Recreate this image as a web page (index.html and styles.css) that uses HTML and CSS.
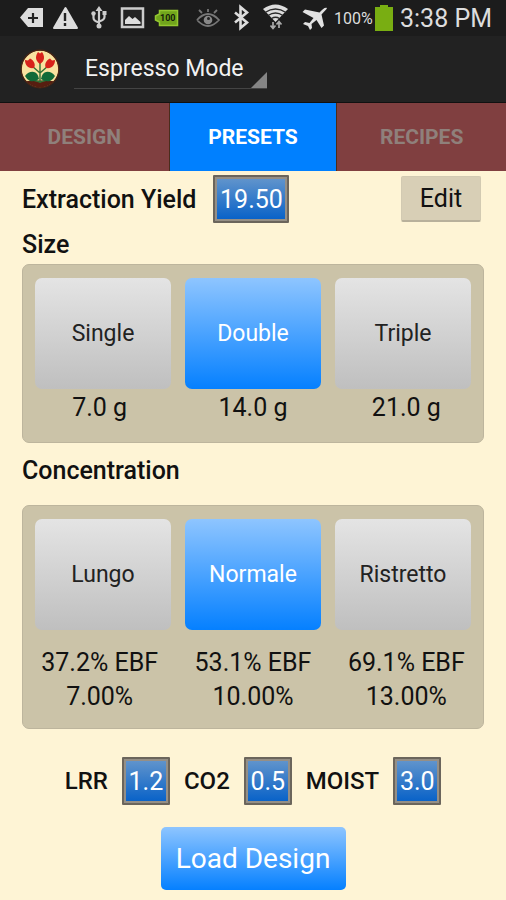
FILE: index.html
```html
<!DOCTYPE html>
<html lang="en">
<head>
<meta charset="utf-8">
<meta name="viewport" content="width=device-width, initial-scale=1">
<title>Espresso Mode</title>
<link rel="stylesheet" href="styles.css">
</head>
<body>
<header>
  <div class="status">
    <div class="status-icons">
      <svg width="30" height="36" viewBox="18 0 30 36" aria-hidden="true"><path d="M28 8h15v19H28l-8-9.500z" fill="#ddd"/><path d="M33 13v10M28 18h10" stroke="#222" stroke-width="2.200"/></svg>
      <svg width="36" height="36" viewBox="48 0 36 36" aria-hidden="true"><path d="M65.500 8l11.500 20H54z" fill="#ddd" stroke="#ddd" stroke-width="2" stroke-linejoin="round"/><path d="M65 13v8M65 23v3" stroke="#222" stroke-width="2.400"/></svg>
      <svg width="30" height="36" viewBox="84 0 30 36" aria-hidden="true"><g fill="none" stroke="#ccc" stroke-width="2.200"><path d="M99 10v17M93.500 14v4q0 3 5.500 4.500M104.500 13v4q0 3-5.500 4.500"/></g><path d="M99 6l3.500 5h-7zM102.500 11h4v4h-4z" fill="#ccc"/><circle cx="93.500" cy="13.500" r="2.200" fill="#ccc"/><circle cx="99" cy="26" r="2.500" fill="#ccc"/></svg>
      <svg width="36" height="36" viewBox="114 0 36 36" aria-hidden="true"><rect x="122" y="8.500" width="21" height="18.500" fill="#222" stroke="#ccc" stroke-width="2.500"/><path d="M125 24v-4l4-4 3.500 3 2.500-2 5.500 5v2z" fill="#ddd"/></svg>
      <svg width="38" height="36" viewBox="150 0 38 36" aria-hidden="true"><path d="M159.500 10.500h18v15h-18v-3.500l-4-2v-4l4-2z" fill="#71a51c" stroke="#93c72f" stroke-width="1.500"/><text class="battery-text" x="160" y="21">100</text></svg>
      <svg width="38" height="36" viewBox="188 0 38 36" aria-hidden="true"><g fill="none" stroke="#777" stroke-width="1.800"><path d="M197 20q11-12 22 0-11 12-22 0M208 12V9M202 13l-3-3M214 13l3-3"/></g><circle cx="208" cy="20" r="4.300" fill="#888"/><circle cx="208.500" cy="18.500" r="1.500" fill="#222"/></svg>
      <svg width="30" height="36" viewBox="226 0 30 36" aria-hidden="true"><path d="M235 12.500l12 10-6.500 5.500V7l6.500 5.500-12 10" fill="none" stroke="#ddd" stroke-width="2.600"/></svg>
      <svg width="40" height="36" viewBox="256 0 40 36" aria-hidden="true"><path d="M263 9q12.500-9 25 0L275.500 22z" fill="#ddd"/><path d="M265 12.500q10.500-7 21 0M268 15.500q7.500-5 15 0M271.500 18.500q4-2.500 8 0" fill="none" stroke="#292929" stroke-width="1.300"/><path d="M273 22v6M270.500 25.500l2.500 3 2.500-3M279 28v-6M276.500 24.500l2.500-3 2.500 3" fill="none" stroke="#aaa" stroke-width="1.700"/></svg>
      <svg width="36" height="36" viewBox="296 0 36 36" aria-hidden="true"><path d="M327 8c-2-1-4 1-7.500 4.500L305 9.500l-2.500 2.500 11 6-4 5-4.500-1-2 2 5 2 2 4 2-2-.5-4 5-4 5 8 2.500-2.500-2.500-11c3-3.500 5-5 5.500-6.500z" fill="#e2e2e2"/></svg>
    </div>
    <span class="percent">100%</span>
    <svg class="battery" width="18" height="26" viewBox="0 0 18 26" aria-hidden="true"><path d="M5 0h8v2h5v24H0V2h5z" fill="#79ae12"/></svg>
    <span class="clock">3:38 PM</span>
  </div>
  <div class="actionbar">
    <svg class="logo" width="40" height="40" viewBox="0 0 40 40" aria-hidden="true">
      <defs><clipPath id="disc"><circle cx="20" cy="20" r="18.500"/></clipPath></defs>
      <g clip-path="url(#disc)"><path d="M0 0h40v40H0z" fill="#f9e2a0"/><path d="M0 33q20-3 40 0v7H0z" fill="#571e10"/></g>
      <circle cx="20" cy="20" r="18.800" fill="none" stroke="#4b2413" stroke-width="1.200"/>
      <path d="M20 14v20M20 24l-8-7M20 24l8-7M20 33l-7-2M20 33l7-2" fill="none" stroke="#317034" stroke-width="1.400"/>
      <path d="M20 15c-6-4-4-9-2-12l2 1.500L22 3c3 4 3 9-2 12z" fill="#d8221b"/>
      <path d="M14 19c-6 1-9-3-9-8l3 .5 2-2c4 2 6 6 4 9.500zM26 19c6 1 9-3 9-8l-3 .5-2-2c-4 2-6 6-4 9.500z" fill="#d8221b"/>
      <path d="M5 27q4-5 9-4 4 1 5 7-4 3-9 2-3-1-5-5zM35 27q-4-5-9-4-4 1-5 7 4 3 9 2 3-1 5-5z" fill="#126a38"/>
    </svg>
    <button class="mode" type="button" aria-haspopup="listbox">Espresso Mode<svg width="16" height="16" viewBox="0 0 16 16" aria-hidden="true"><path d="M16 0v16H0z" fill="#858585"/></svg></button>
  </div>
  <nav class="tabs">
    <a href="#design">DESIGN</a>
    <a class="active" href="#presets" aria-current="page">PRESETS</a>
    <a href="#recipes">RECIPES</a>
  </nav>
</header>
<main>
  <div class="yield">
    <label class="title" for="yield">Extraction Yield</label>
    <input class="value wide" id="yield" type="text" inputmode="decimal" value="19.50">
    <button class="edit" type="button">Edit</button>
  </div>
  <h2 class="title">Size</h2>
  <section class="panel" aria-label="Size">
    <div class="choices">
      <button type="button">Single</button>
      <button class="selected" type="button" aria-pressed="true">Double</button>
      <button type="button">Triple</button>
    </div>
    <div class="amounts">
      <span>7.0 g</span><span>14.0 g</span><span>21.0 g</span>
    </div>
  </section>
  <h2 class="title spaced">Concentration</h2>
  <section class="panel tall" aria-label="Concentration">
    <div class="choices">
      <button type="button">Lungo</button>
      <button class="selected" type="button" aria-pressed="true">Normale</button>
      <button type="button">Ristretto</button>
    </div>
    <div class="amounts">
      <span>37.2% EBF</span><span>53.1% EBF</span><span>69.1% EBF</span>
      <span>7.00%</span><span>10.00%</span><span>13.00%</span>
    </div>
  </section>
  <div class="params">
    <label for="lrr">LRR</label><input class="value" id="lrr" type="text" inputmode="decimal" value="1.2">
    <label for="co2">CO2</label><input class="value" id="co2" type="text" inputmode="decimal" value="0.5">
    <label for="moist">MOIST</label><input class="value" id="moist" type="text" inputmode="decimal" value="3.0">
  </div>
  <button class="load" type="button">Load Design</button>
</main>
</body>
</html>
```
FILE: styles.css
```css
* {
  box-sizing: border-box;
}

body {
  margin: 0;
  background: #fef4d5;
  color: #111;
  font-family: Roboto, sans-serif;
  font-size: 25px;
}

button,
input {
  margin: 0;
  padding: 0;
  border: 0;
  font: inherit;
}

svg {
  display: block;
  flex: none;
}

.status {
  display: flex;
  align-items: center;
  height: 36px;
  padding: 0 14px 0 18px;
  background: #1c1c1c;
  color: #ddd;
}

.status-icons {
  display: flex;
}

.battery-text {
  font-size: 9px;
  font-weight: 700;
  fill: #14200a;
}

.percent {
  margin-left: 2px;
  font-size: 16px;
}

.battery {
  margin-left: 2px;
}

.clock {
  margin-left: auto;
  white-space: nowrap;
}

.actionbar {
  display: flex;
  align-items: center;
  gap: 14px;
  height: 66px;
  padding: 0 20px;
  background: #222;
}

.mode {
  display: flex;
  align-items: flex-end;
  justify-content: space-between;
  width: 193px;
  height: 40px;
  padding-left: 11px;
  border-bottom: 1px solid #444;
  background: none;
  color: #f2f2f2;
  font-size: 23px;
  line-height: 38px;
  white-space: nowrap;
}

.tabs {
  display: grid;
  grid-template-columns: repeat(3, 1fr);
  height: 69px;
  border-top: 1px solid #111;
}

.tabs a {
  display: flex;
  align-items: center;
  justify-content: center;
  background: #803f40;
  color: #8f807b;
  font-size: 21px;
  font-weight: 700;
  text-decoration: none;
}

.tabs .active {
  border: solid #4a2c1c;
  border-width: 0 1px;
  background: #0080ff;
  color: #fff;
}

main {
  display: flex;
  flex-direction: column;
  padding: 4px 22px 10px;
}

.yield {
  display: flex;
  align-items: center;
  height: 48px;
}

label {
  font-size: 24px;
  font-weight: 500;
}

.title {
  font-size: 25px;
  font-weight: 500;
}

.value {
  width: 48px;
  height: 48px;
  border: 2px solid #6b655c;
  border-radius: 1px;
  background: linear-gradient(#6496cc, #0560c8);
  box-shadow: inset 0 0 0 2px #958f86;
  color: #fff;
  text-align: center;
}

.wide {
  width: 76px;
  margin-left: 17px;
}

.edit {
  width: 80px;
  height: 46px;
  margin: 0 3px 0 auto;
  border: 1px solid #d2cab2;
  border-bottom: 2px solid #b8b09b;
  border-radius: 2px;
  background: #d8cfb6;
  color: #111;
}

h2 {
  margin: 7px 0 4px;
  line-height: 30px;
}

.spaced {
  margin: 13px 0 19px;
}

.panel {
  height: 179px;
  padding-top: 13px;
  border: 1px solid #bdb59d;
  border-radius: 7px;
  background: #cbc3a8;
}

.tall {
  height: 224px;
}

.choices {
  display: grid;
  grid-template-columns: repeat(3, 1fr);
  gap: 14px;
  padding: 0 12px;
}

.choices button {
  height: 111px;
  border-radius: 7px;
  background: linear-gradient(#e4e4e4, #bfbfbf);
  color: #222;
  font-size: 23px;
}

.choices .selected {
  background: linear-gradient(#8ec5ff, #0580ff);
  color: #fff;
}

.amounts {
  display: grid;
  grid-template-columns: repeat(3, 1fr);
  padding-top: 2px;
  line-height: 34px;
  text-align: center;
}

.tall .amounts {
  padding-top: 16px;
}

.params {
  display: flex;
  align-items: center;
  justify-content: center;
  gap: 14px;
  margin-top: 28px;
}

.load {
  align-self: center;
  width: 185px;
  height: 63px;
  margin-top: 22px;
  border-radius: 5px;
  background: linear-gradient(#8ec5ff, #0580ff);
  color: #fff;
  font-size: 28px;
}
```
